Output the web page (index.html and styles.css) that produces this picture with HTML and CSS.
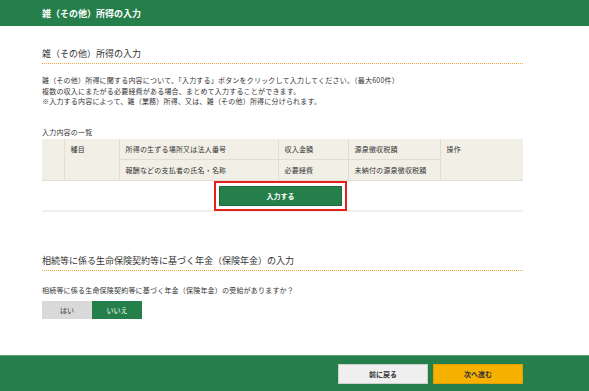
FILE: index.html
```html
<!DOCTYPE html>
<html lang="ja">
<head>
<meta charset="utf-8">
<title>雑（その他）所得の入力</title>
<link rel="stylesheet" href="styles.css">
</head>
<body>
<header class="topbar"><h1 class="topbar-title">雑（その他）所得の入力</h1></header>
<main class="content">
  <section class="section">
    <h2 class="section-heading">雑（その他）所得の入力</h2>
    <p class="desc">雑（その他）所得に関する内容について、「入力する」ボタンをクリックして入力してください。（最大600件）<br>複数の収入にまたがる必要経費がある場合、まとめて入力することができます。<br>※入力する内容によって、雑（業務）所得、又は、雑（その他）所得に分けられます。</p>
    <div class="list-label">入力内容の一覧</div>
    <table class="list-table">
      <colgroup>
        <col class="c1"><col class="c2"><col class="c3"><col class="c4"><col class="c5"><col class="c6">
      </colgroup>
      <tr>
        <th rowspan="2"></th>
        <th rowspan="2">種目</th>
        <th>所得の生ずる場所又は法人番号</th>
        <th>収入金額</th>
        <th>源泉徴収税額</th>
        <th rowspan="2">操作</th>
      </tr>
      <tr>
        <th>報酬などの支払者の氏名・名称</th>
        <th>必要経費</th>
        <th>未納付の源泉徴収税額</th>
      </tr>
    </table>
    <div class="add-row">
      <div class="highlight"><button class="btn-add" type="button">入力する</button></div>
    </div>
  </section>
  <section class="section section-2">
    <h2 class="section-heading">相続等に係る生命保険契約等に基づく年金（保険年金）の入力</h2>
    <p class="question">相続等に係る生命保険契約等に基づく年金（保険年金）の受給がありますか？</p>
    <div class="toggle">
      <button class="toggle-btn" type="button">はい</button>
      <button class="toggle-btn is-active" type="button">いいえ</button>
    </div>
  </section>
</main>
<footer class="footer">
  <div class="footer-inner">
    <button class="btn-back" type="button">前に戻る</button>
    <button class="btn-next" type="button">次へ進む</button>
  </div>
</footer>
</body>
</html>
```

FILE: styles.css
```css
html, body {
  margin: 0;
  padding: 0;
}
body {
  font-family: "Noto Sans CJK JP", "Noto Sans", sans-serif;
  color: #333;
  background: #fff;
  height: 100vh;
  display: flex;
  flex-direction: column;
}
.topbar {
  background: #257f4a;
  height: 26px;
  display: flex;
  align-items: center;
  padding-left: 42px;
}
.topbar-title {
  margin: 0;
  color: #fff;
  font-size: 9px;
  font-weight: bold;
  line-height: 1;
}
.content {
  margin-left: 42px;
  width: 481px;
}
.section-heading {
  margin: 21px 0 0;
  font-size: 9px;
  font-weight: normal;
  line-height: 13px;
  padding-bottom: 3px;
  border-bottom: 1px dotted #f2a93a;
  color: #333;
}
.desc {
  margin: 11px 0 0;
  font-size: 7px;
  line-height: 10.5px;
  letter-spacing: 0.2px;
}
.list-label {
  margin-top: 20px;
  font-size: 7px;
  line-height: 10px;
  letter-spacing: 0.2px;
}
.list-table {
  margin-top: 2px;
  width: 481px;
  border-collapse: collapse;
  background: #f2f0e6;
  table-layout: fixed;
}
.c1 { width: 22px; }
.c2 { width: 55px; }
.c3 { width: 159px; }
.c4 { width: 70px; }
.c5 { width: 92px; }
.c6 { width: 83px; }
.list-table th {
  border: 1px solid #e0ddd2;
  font-size: 7px;
  font-weight: normal;
  text-align: left;
  vertical-align: top;
  height: 21px;
  padding: 5px 6px 0;
  box-sizing: border-box;
  line-height: 10px;
  letter-spacing: 0.2px;
}
.list-table tr:first-child th { border-top: 0; }
.list-table th:first-child { border-left: 0; }
.list-table th:last-child { border-right: 0; }
.add-row {
  display: flex;
  justify-content: center;
  border-bottom: 2px solid #efefef;
  padding-right: 4px;
}
.highlight {
  border: 2px solid #e8201c;
  padding: 3px;
  margin-bottom: -1px;
}
.btn-add {
  display: block;
  width: 123px;
  height: 20px;
  border: 1px solid #1e6b3e;
  background: #257f4a;
  color: #fff;
  font-family: inherit;
  font-size: 7px;
  font-weight: bold;
  padding: 0;
}
.section-2 .section-heading {
  margin-top: 42px;
}
.question {
  margin: 14px 0 0;
  font-size: 7px;
  line-height: 10px;
  letter-spacing: 0.2px;
}
.toggle {
  display: flex;
  margin-top: 6px;
}
.toggle-btn {
  width: 50px;
  height: 18px;
  border: 0;
  padding: 0;
  background: #d9d9d9;
  color: #333;
  font-family: inherit;
  font-size: 7px;
}
.toggle-btn.is-active {
  background: #257f4a;
  color: #fff;
}
.footer {
  margin-top: auto;
  background: #257f4a;
  border-top: 1px solid #5fa57a;
  height: 35px;
}
.footer-inner {
  margin-left: 42px;
  width: 481px;
  display: flex;
  justify-content: flex-end;
  gap: 5px;
  padding-top: 8px;
}
.btn-back, .btn-next {
  width: 90px;
  height: 20px;
  padding: 0;
  font-family: inherit;
  font-size: 7px;
  font-weight: bold;
  color: #333;
}
.btn-back {
  background: #efefef;
  border: 1px solid #cfcfcf;
}
.btn-next {
  background: #f5b000;
  border: 1px solid #e0a000;
}
```
